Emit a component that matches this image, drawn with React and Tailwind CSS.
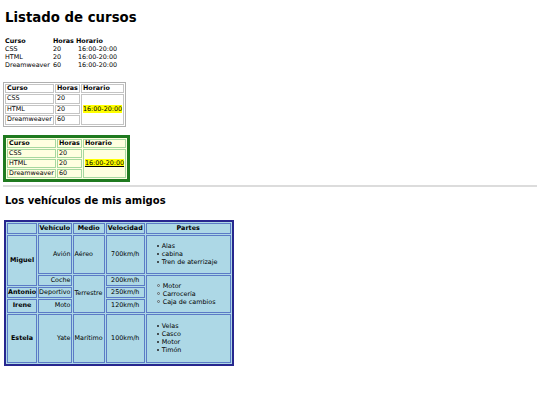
import React from "react";

const cursos = [
  ["CSS", "20"],
  ["HTML", "20"],
  ["Dreamweaver", "60"],
];

function Listado({ variant }) {
  const boxed = variant !== "plain";
  const green = variant === "green";
  const table = green
    ? "border-separate border-spacing-[1px] border-[3px] border-[#1f7a1f] bg-[#ffffe0]"
    : boxed
    ? "border-separate border-spacing-[1px] border border-[#b0b0b0]"
    : "border-separate border-spacing-0";
  const cell = green
    ? "border border-[#a6d8a0] px-[1px] leading-[7px] text-left"
    : boxed
    ? "border border-[#c4c4c4] px-[1px] leading-[7.5px] text-left"
    : "px-[1px] text-left leading-[8px]";
  return (
    <table className={table}>
      <tbody>
        <tr>
          <th className={cell}>Curso</th>
          <th className={cell + (boxed ? "" : " pl-[2px]")}>Horas</th>
          <th className={cell}>Horario</th>
        </tr>
        {cursos.map((c, i) => (
          <tr key={i}>
            <td className={cell}>{c[0]}</td>
            <td className={cell + (boxed ? "" : " pl-[2px]")}>{c[1]}</td>
            {!boxed ? (
              <td className={cell + " pl-[3px]"}>16:00-20:00</td>
            ) : i === 0 ? (
              <td className={cell} rowSpan={3}>
                <span className={"bg-[#ffff00] " + (green ? "underline" : "")}>16:00-20:00</span>
              </td>
            ) : null}
          </tr>
        ))}
      </tbody>
    </table>
  );
}

function Lista({ items, circle, my }) {
  return (
    <ul className={"pl-[10px] text-left leading-[8px] " + my}>
      {items.map((e, i) => (
        <li key={i} className="flex items-center">
          {circle ? (
            <span className="mr-[3px] inline-block h-[3px] w-[3px] rounded-full border border-[#666]" />
          ) : (
            <span className="mr-[3px] inline-block h-[2px] w-[2px] rounded-full bg-[#222]" />
          )}
          <span>{e}</span>
        </li>
      ))}
    </ul>
  );
}

export default function App() {
  const c = "border border-[#5b7bc6] px-0";
  return (
    <div className="bg-white min-h-[405px] w-[540px] px-[3px] pt-[1px] font-['DejaVu_Sans',sans-serif] text-[6.4px] leading-[1.17] text-black">
      <h1 className="mt-[9px] mb-[11px] pl-[2px] text-[13.3px] font-bold leading-[1.2]">Listado de cursos</h1>
      <div className="pl-[1px]">
        <Listado variant="plain" />
      </div>
      <div className="h-[13px]" />
      <Listado variant="boxed" />
      <div className="h-[8px]" />
      <Listado variant="green" />
      <hr className="mt-[3px] border-t-2 border-[#dcdcdc]" />
      <h2 className="mt-[8px] mb-[13px] pl-[2px] text-[10px] font-bold leading-[1.2]">Los vehículos de mis amigos</h2>
      <table className="ml-[1px] border-separate border-spacing-[1px] border-2 border-[#27278f] bg-[#add8e6]">
        <tbody>
          <tr>
            <th className={c + " h-[11px]"}></th>
            <th className={c}>Vehículo</th>
            <th className={c + " px-[1px]"}>Medio</th>
            <th className={c + " px-[1px]"}>Velocidad</th>
            <th className={c + " w-[85px]"}>Partes</th>
          </tr>
          <tr>
            <th className={c} rowSpan={2}>Miguel</th>
            <td className={c + " h-[39px] text-right"}>Avión</td>
            <td className={c + " px-[1px]"}>Aéreo</td>
            <td className={c + " text-center"}>700km/h</td>
            <td className={c}>
              <Lista my="my-[6px]" items={["Alas", "cabina", "Tren de aterrizaje"]} />
            </td>
          </tr>
          <tr>
            <td className={c + " h-[11px] text-right"}>Coche</td>
            <td className={c + " px-[1px]"} rowSpan={3}>Terrestre</td>
            <td className={c + " text-center"}>200km/h</td>
            <td className={c} rowSpan={3}>
              <Lista circle my="my-[5px]" items={["Motor", "Carrocería", "Caja de cambios"]} />
            </td>
          </tr>
          <tr>
            <th className={c + " h-[11px]"}>Antonio</th>
            <td className={c + " text-right"}>Deportivo</td>
            <td className={c + " text-center"}>250km/h</td>
          </tr>
          <tr>
            <th className={c + " h-[14px]"}>Irene</th>
            <td className={c + " text-right"}>Moto</td>
            <td className={c + " text-center"}>120km/h</td>
          </tr>
          <tr>
            <th className={c + " h-[49px]"}>Estela</th>
            <td className={c + " text-right"}>Yate</td>
            <td className={c + " px-[1px]"}>Marítimo</td>
            <td className={c + " text-center"}>100km/h</td>
            <td className={c}>
              <Lista my="my-[6px]" items={["Velas", "Casco", "Motor", "Timón"]} />
            </td>
          </tr>
        </tbody>
      </table>
    </div>
  );
}
